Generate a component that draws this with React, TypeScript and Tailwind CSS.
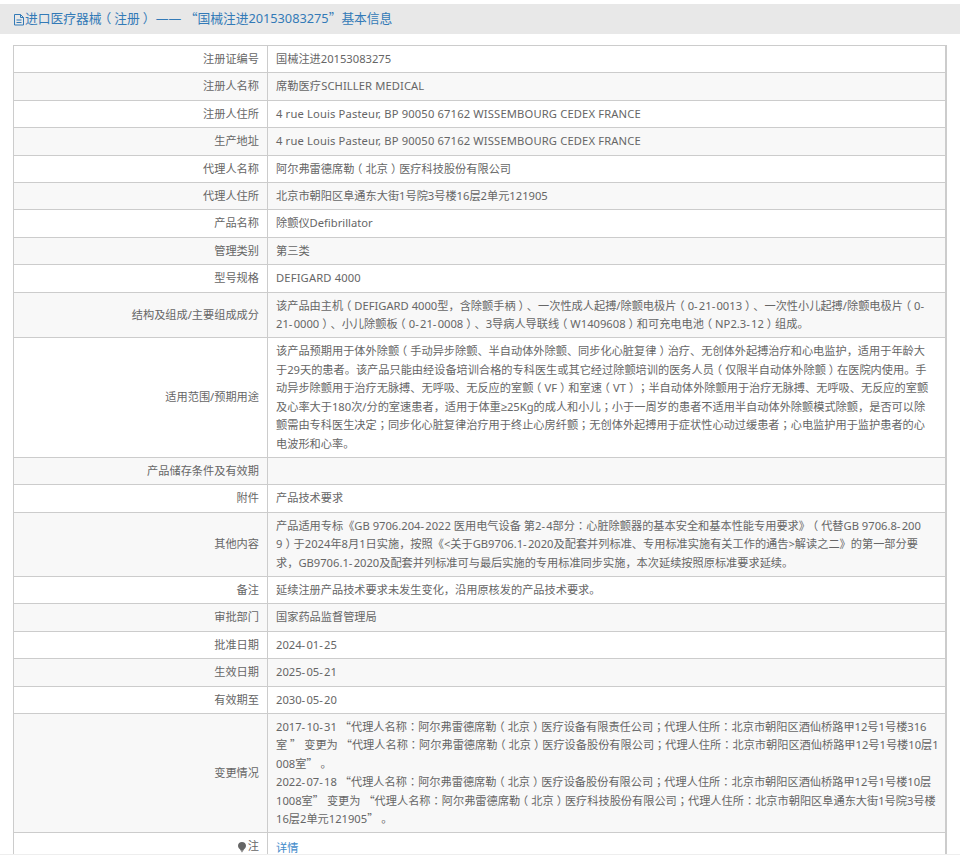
import React from "react";

const addr = "4 rue Louis Pasteur, BP 90050 67162 WISSEMBOURG CEDEX FRANCE";

// Full-width marks sit centred in the reference, quotes are full width, hyphens are wider.
function T({ s }: { s: string }) {
  const parts = s.split(/(（|）|[：；]+|“|”|，|-|≥)/);
  return (
    <>
      {parts.map((p, i) =>
        p === "（" ? (
          <span key={i} className="leading-[0] relative left-[-3px]">{p}</span>
        ) : p === "）" ? (
          <span key={i} className="leading-[0] relative left-[3px]">{p}</span>
        ) : /^[：；]+$/.test(p) ? (
          <span key={i} className="leading-[0] font-['Noto_Sans_CJK_TC',sans-serif]">{p}</span>
        ) : p === "“" || p === "”" ? (
          <span key={i} className="leading-[0] font-['Noto_Sans_CJK_SC',sans-serif]">{p}</span>
        ) : p === "，" ? (
          <span key={i} className="leading-[0] font-['Noto_Sans_CJK_KR',sans-serif]">{p}</span>
        ) : p === "≥" ? (
          <span key={i} className="leading-[0] font-['Liberation_Sans',sans-serif]">{p}</span>
        ) : p === "-" ? (
          <span key={i} className="tracking-[1.2px]">{p}</span>
        ) : (
          <React.Fragment key={i}>{p}</React.Fragment>
        )
      )}
    </>
  );
}

const rows: [React.ReactNode, string | React.ReactNode][] = [
  ["注册证编号", "国械注进20153083275"],
  ["注册人名称", <span className="tracking-[0.1px]">席勒医疗SCHILLER MEDICAL</span>],
  ["注册人住所", <span className="tracking-[0.15px]">{addr}</span>],
  ["生产地址", <span className="tracking-[0.15px]">{addr}</span>],
  ["代理人名称", "阿尔弗雷德席勒（北京）医疗科技股份有限公司"],
  ["代理人住所", "北京市朝阳区阜通东大街1号院3号楼16层2单元121905"],
  ["产品名称", "除颤仪Defibrillator"],
  ["管理类别", "第三类"],
  ["型号规格", <span className="tracking-[0.15px]">DEFIGARD 4000</span>],
  ["结构及组成/主要组成成分", "该产品由主机（DEFIGARD 4000型，含除颤手柄）、一次性成人起搏/除颤电极片（0-21-0013）、一次性小儿起搏/除颤电极片（0-\n21-0000）、小儿除颤板（0-21-0008）、3导病人导联线（W1409608）和可充电电池（NP2.3-12）组成。"],
  ["适用范围/预期用途", "该产品预期用于体外除颤（手动异步除颤、半自动体外除颤、同步化心脏复律）治疗、无创体外起搏治疗和心电监护，适用于年龄大\n于29天的患者。该产品只能由经设备培训合格的专科医生或其它经过除颤培训的医务人员（仅限半自动体外除颤）在医院内使用。手\n动异步除颤用于治疗无脉搏、无呼吸、无反应的室颤（VF）和室速（VT）；半自动体外除颤用于治疗无脉搏、无呼吸、无反应的室颤\n及心率大于180次/分的室速患者，适用于体重≥25Kg的成人和小儿；小于一周岁的患者不适用半自动体外除颤模式除颤，是否可以除\n颤需由专科医生决定；同步化心脏复律治疗用于终止心房纤颤；无创体外起搏用于症状性心动过缓患者；心电监护用于监护患者的心\n电波形和心率。"],
  ["产品储存条件及有效期", ""],
  ["附件", "产品技术要求"],
  ["其他内容", "产品适用专标《GB 9706.204-2022 医用电气设备 第2-4部分：心脏除颤器的基本安全和基本性能专用要求》（代替GB 9706.8-200\n9）于2024年8月1日实施，按照《<关于GB9706.1-2020及配套并列标准、专用标准实施有关工作的通告>解读之二》的第一部分要\n求，GB9706.1-2020及配套并列标准可与最后实施的专用标准同步实施，本次延续按照原标准要求延续。"],
  ["备注", "延续注册产品技术要求未发生变化，沿用原核发的产品技术要求。"],
  ["审批部门", "国家药品监督管理局"],
  ["批准日期", "2024-01-25"],
  ["生效日期", "2025-05-21"],
  ["有效期至", "2030-05-20"],
  [
    "变更情况",
    "2017-10-31 “代理人名称：阿尔弗雷德席勒（北京）医疗设备有限责任公司；代理人住所：北京市朝阳区酒仙桥路甲12号1号楼316\n室 ” 变更为 “代理人名称：阿尔弗雷德席勒（北京）医疗设备股份有限公司；代理人住所：北京市朝阳区酒仙桥路甲12号1号楼10层1\n008室” 。\n2022-07-18 “代理人名称：阿尔弗雷德席勒（北京）医疗设备股份有限公司；代理人住所：北京市朝阳区酒仙桥路甲12号1号楼10层\n1008室” 变更为 “代理人名称：阿尔弗雷德席勒（北京）医疗科技股份有限公司；代理人住所：北京市朝阳区阜通东大街1号院3号楼\n16层2单元121905” 。",
  ],
  [
    <span className="inline-flex items-center gap-[1px]">
      <svg width="10" height="12" viewBox="0 0 10 12" fill="#666">
        <path d="M5 1C2.700 1 1 2.700 1 4.800c0 1.500.9 2.500 1.700 3.300.5.5.8 1 1 1.600h2.600c.2-.6.5-1.100 1-1.600C8.100 7.300 9 6.300 9 4.800 9 2.700 7.300 1 5 1zM3.900 10.300h2.200L5 11.500z" />
      </svg>
      注
    </span>,
    <span className="text-[#428bca]">详情</span>,
  ],
];

export default function App() {
  return (
    <div className="h-[851px] w-[960px] mt-[4px] overflow-hidden bg-white font-['Noto_Sans','Noto_Sans_CJK_SC',sans-serif] text-[11.2px] text-[#666] border-b border-[#eee] [text-spacing-trim:space-all]">
      <div className="h-[30px] bg-[#e8e8e8] flex items-center pl-[13px] text-[12.75px] text-[#337ab7]">
        <svg width="12" height="13" viewBox="0 0 12 13" fill="none" stroke="#337ab7" strokeWidth="1" className="shrink-0">
          <path d="M1.500 1.500h6l3 3v7.500h-9zM7.500 1.500v3h3M3.500 7h5M3.500 9.500h5" />
        </svg>
        <span>
          <T s="进口医疗器械（注册） —— “国械注进20153083275”基本信息" />
        </span>
      </div>
      <div className="h-[11px] bg-white" />
      <table className="ml-[13px] w-[934px] border-collapse table-fixed border-r-2 border-[#ccc]">
        <colgroup>
          <col className="w-[254px]" />
          <col />
        </colgroup>
        <tbody>
          {rows.map(([k, v], i) => (
            <tr key={i} className={i % 2 === 1 ? "bg-[#f8f8f8]" : "bg-white"}>
              <td className="border border-[#ccc] text-right align-middle px-[8px] py-[4px] leading-[18.4px]">{k}</td>
              <td className="border border-[#ccc] align-middle pl-[8px] pr-[9px] py-[4px] leading-[18.4px] whitespace-pre">
                {typeof v === "string" ? <T s={v} /> : v}
              </td>
            </tr>
          ))}
        </tbody>
      </table>
    </div>
  );
}
